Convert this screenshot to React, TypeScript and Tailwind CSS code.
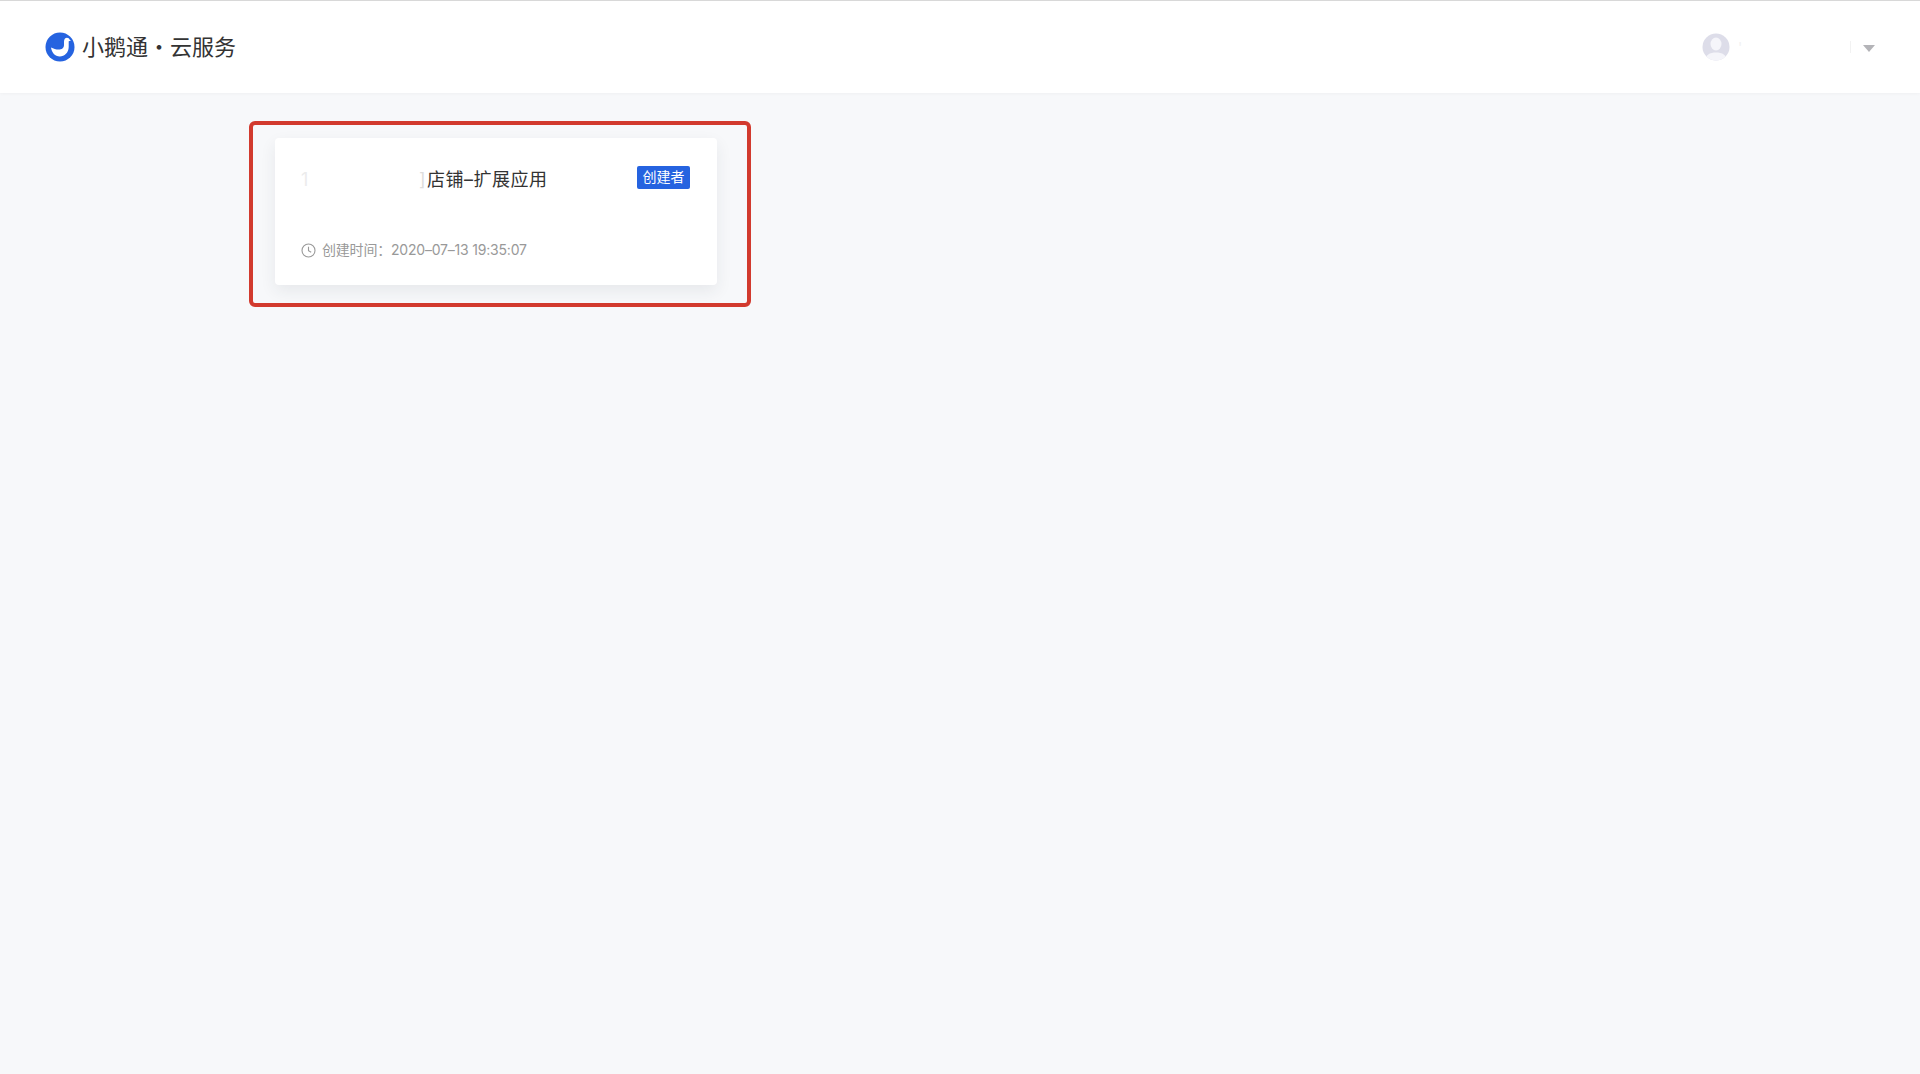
import React from "react";

function Logo() {
  return (
    <svg width="30" height="30" viewBox="0 0 30 30" className="shrink-0">
      <circle cx="15" cy="15" r="14.5" fill="#2563e0" />
      <path d="M6 15.500C8.500 16.800 11 17.600 13.500 17.600C16.800 17.600 19 16 19 13V9.500C19 7.200 20.200 5.800 22 5.800C23.300 5.800 24.300 6.600 24.700 7.800L26 8.600L23.700 9.200V15C23.700 20.500 19.500 24.500 14.800 24.500C10 24.500 6.700 20.500 6 15.500z" fill="#ffffff" />
    </svg>
  );
}

function Avatar() {
  return (
    <svg width="28" height="28" viewBox="0 0 28 28" className="shrink-0">
      <defs>
        <clipPath id="av"><circle cx="14" cy="14" r="13.500" /></clipPath>
      </defs>
      <circle cx="14" cy="14" r="13.500" fill="#dddde9" />
      <g clipPath="url(#av)" fill="#f5f5fa">
        <ellipse cx="14" cy="11" rx="5.500" ry="6.500" />
        <path d="M3 28c0-6 5-8.500 11-8.500S25 22 25 28z" />
      </g>
    </svg>
  );
}

export default function App() {
  return (
    <div className="min-h-[1074px] bg-[#f7f8fa] font-['Inter','Noto_Sans_CJK_SC',sans-serif]">
      <header className="flex h-[93px] items-center justify-between border-t border-t-[#d8d8d8] bg-white pl-[45px] pr-[45px] shadow-[0_1px_3px_rgba(0,0,0,0.03)]">
        <div className="flex items-center gap-[7px]">
          <Logo />
          <span className="text-[22px] leading-[30px] text-[#333333]">小鹅通・云服务</span>
        </div>
        <div className="flex items-center">
          <Avatar />
          <span className="ml-[8px] w-[112px] text-[14px] text-[#f2f2f2]">'</span>
          <span className="h-[12px] w-px bg-[#f2f2f2]" />
          <span className="ml-[12px] mt-[3px] h-0 w-0 border-x-[6px] border-t-[7px] border-x-transparent border-t-[#b4b4b8]" />
        </div>
      </header>
      <main className="pl-[249px] pt-[28px]">
        <div className="h-[186px] w-[502px] rounded-[6px] border-[4px] border-[#d23a2e] pl-[22px] pt-[13px]">
          <div className="flex h-[147px] w-[442px] flex-col justify-between rounded-[4px] bg-white px-[26px] pb-[25px] pt-[26px] shadow-[0_6px_16px_rgba(40,50,70,0.08)]">
            <div className="flex items-start justify-between">
              <div className="mt-[2px] flex h-[28px] items-center text-[18px] leading-[28px] tracking-[0.5px] text-[#333333]">
                <span className="w-[118px] text-[#ececec]">1</span>
                <span className="w-[8px] text-[#dddddd]">]</span>
                <span>店铺–扩展应用</span>
              </div>
              <span className="mr-[1px] mt-[2px] flex h-[23px] w-[53px] items-center justify-center rounded-[2px] bg-[#2563e0] pb-[2px] text-[14px] text-white">创建者</span>
            </div>
            <div className="flex items-center gap-[6px] text-[14px] leading-[20px] tracking-[-0.2px] text-[#999999]">
              <svg width="15" height="15" viewBox="0 0 15 15" fill="none" stroke="#999999" strokeWidth="1.100">
                <circle cx="7.500" cy="7.500" r="6.500" />
                <path d="M7.500 3.800v4l2.700 1.500" />
              </svg>
              <span>创建时间：2020–07–13 19:35:07</span>
            </div>
          </div>
        </div>
      </main>
    </div>
  );
}
